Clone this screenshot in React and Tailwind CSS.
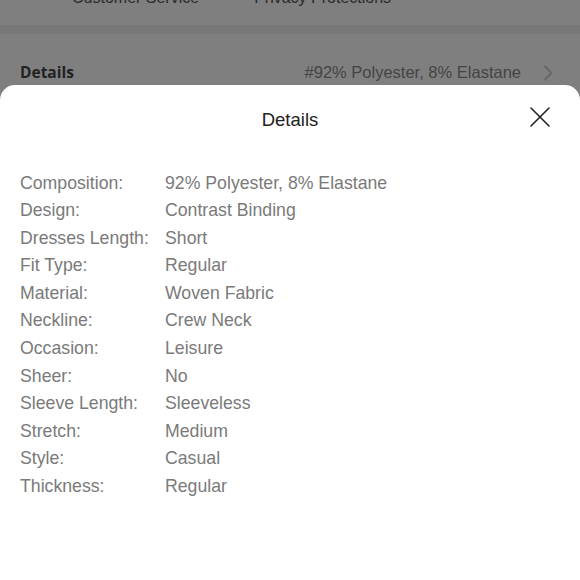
import React from 'react';

const rows = [
  ['Composition:', '92% Polyester, 8% Elastane'],
  ['Design:', 'Contrast Binding'],
  ['Dresses Length:', 'Short'],
  ['Fit Type:', 'Regular'],
  ['Material:', 'Woven Fabric'],
  ['Neckline:', 'Crew Neck'],
  ['Occasion:', 'Leisure'],
  ['Sheer:', 'No'],
  ['Sleeve Length:', 'Sleeveless'],
  ['Stretch:', 'Medium'],
  ['Style:', 'Casual'],
  ['Thickness:', 'Regular'],
];

export default function App() {
  return (
    <div
      className="w-full h-[580px] overflow-hidden flex flex-col bg-[#7f7f7f]"
      style={{ fontFamily: '"Liberation Sans", Arial, sans-serif' }}
    >
      {/* dimmed page behind the sheet */}
      <div className="h-[85px] shrink-0 flex flex-col">
        <div className="h-[27px] flex items-end pb-[19px] overflow-hidden">
          <div className="flex items-center text-[16px] text-[#2b2b2b] leading-none">
            <span className="ml-[58px] w-[4px] h-[4px] rounded-full bg-[#2e5a3a] mr-[10px]"></span>
            <span>Customer Service</span>
            <span className="ml-[41px] w-[4px] h-[4px] rounded-full bg-[#2e5a3a] mr-[10px]"></span>
            <span>Privacy Protections</span>
          </div>
        </div>
        <div className="h-[11px] bg-[#787878]"></div>
        <div className="flex-1 flex items-center justify-between pl-[20px] pr-[27px] pt-[26px]">
          <span className="text-[15.5px] font-bold text-[#222]" style={{ fontFamily: '"Open Sans", sans-serif' }}>Details</span>
          <div className="flex items-center">
            <span className="text-[16.5px] text-[#444]">#92% Polyester, 8% Elastane</span>
            <svg className="ml-[22px]" width="10" height="16" viewBox="0 0 10 16" fill="none">
              <path d="M2 1.5 L8.5 8 L2 14.5" stroke="#666" strokeWidth="1.8" strokeLinecap="round" strokeLinejoin="round" />
            </svg>
          </div>
        </div>
      </div>

      {/* bottom sheet */}
      <div className="flex-1 bg-white rounded-t-[15px] flex flex-col">
        <div className="h-[70px] relative flex items-center justify-center">
          <span className="text-[18.5px] text-[#222]">Details</span>
          <button className="absolute right-[30px] top-[22px] w-[20px] h-[20px] flex items-center justify-center">
            <svg width="20" height="20" viewBox="0 0 20 20" fill="none">
              <path d="M1 1 L19 19 M19 1 L1 19" stroke="#222" strokeWidth="1.6" strokeLinecap="round" />
            </svg>
          </button>
        </div>
        <div className="pt-[14px] pl-[20px] grid grid-cols-[145px_1fr] auto-rows-[27.6px] text-[17.7px] text-[#7a7a7a]">
          {rows.map(([label, value]) => (
            <React.Fragment key={label}>
              <div className="flex items-center whitespace-nowrap">{label}</div>
              <div className="flex items-center">{value}</div>
            </React.Fragment>
          ))}
        </div>
      </div>
    </div>
  );
}
